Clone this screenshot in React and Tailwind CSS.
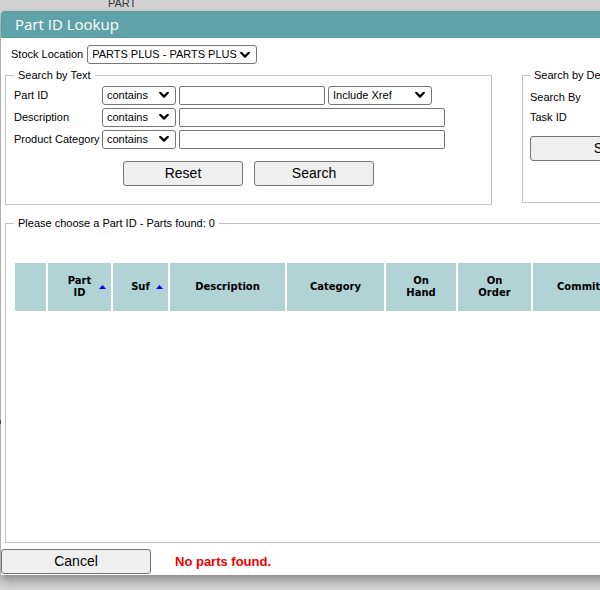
import React from "react";

const font = { fontFamily: '"Liberation Sans", Arial, sans-serif' };

function Chevron() {
  return (
    <svg width="10" height="7" viewBox="0 0 10 7" className="pointer-events-none absolute right-[6px] top-1/2 -translate-y-1/2">
      <path d="M1.2 1.3 L5 5.1 L8.8 1.3" fill="none" stroke="#000" strokeWidth="2.2" strokeLinecap="round" strokeLinejoin="round" />
    </svg>
  );
}

function Select({ className, text }) {
  return (
    <div className={"relative flex items-center border border-[#767676] rounded-[3px] bg-white text-[11px] text-black pl-[4px] " + className}>
      <span className="whitespace-nowrap">{text}</span>
      <Chevron />
    </div>
  );
}

function Input({ className }) {
  return <div className={"border border-[#767676] rounded-[2px] bg-white " + className} />;
}

function Btn({ className, children }) {
  return (
    <div className={"flex items-center justify-center border border-[#767676] rounded-[3px] bg-[#efefef] text-[14px] text-black " + className}>
      {children}
    </div>
  );
}

function Arrow() {
  return (
    <svg width="7" height="5" viewBox="0 0 7 5" className="absolute right-[5px] top-1/2 -translate-y-1/2">
      <path d="M0 4.5 L3.5 0.5 L7 4.5 Z" fill="#0000ee" />
    </svg>
  );
}

function Th({ className, children, arrow }) {
  return (
    <div className={"relative flex items-center justify-center bg-[#b1d3d6] text-center leading-[12px] " + className}>
      <span>{children}</span>
      {arrow && <Arrow />}
    </div>
  );
}

export default function App() {
  return (
    <div className="relative w-[600px] h-[590px] overflow-hidden bg-[#d2d2d2]" style={font}>
      <div className="absolute left-[108px] top-[-5px] text-[11px] text-[#333]">PART</div>
      <div className="absolute left-[0px] top-[420px] w-[2px] h-[4px] bg-[#555]" />
      <div className="absolute left-[1px] top-[11px] w-[800px] h-[564px] bg-white rounded-t-[3px] shadow-[0_5px_10px_rgba(0,0,0,0.35)] flex flex-col">
        <div className="h-[27px] bg-[#5fa3a8] rounded-t-[3px] flex items-center pl-[13px] text-white text-[15px] border border-[#5a9aa0]" style={{ fontFamily: '"Open Sans", "Liberation Sans", sans-serif' }}>
          Part ID Lookup
        </div>
        <div className="flex flex-col px-[4px]">
          <div className="flex items-center gap-[4px] pl-[6px] mt-[7px] text-[11px] text-black">
            <span>Stock Location</span>
            <Select className="w-[170px] h-[19px]" text="PARTS PLUS - PARTS PLUS" />
          </div>
          <div className="flex gap-[30px] mt-[3px]">
            <fieldset className="w-[487px] h-[138px] border border-[#c0c0c0] px-[8px] pt-[2px] shrink-0">
              <legend className="px-[4px] text-[11px] text-black">Search by Text</legend>
              <div className="flex flex-col gap-[3px] text-[11px] text-black">
                <div className="flex items-center h-[19px]">
                  <span className="w-[88px]">Part ID</span>
                  <Select className="w-[74px] h-[19px]" text="contains" />
                  <Input className="w-[146px] h-[19px] ml-[3px]" />
                  <Select className="w-[104px] h-[19px] ml-[3px]" text="Include Xref" />
                </div>
                <div className="flex items-center h-[19px]">
                  <span className="w-[88px]">Description</span>
                  <Select className="w-[74px] h-[19px]" text="contains" />
                  <Input className="w-[266px] h-[19px] ml-[3px]" />
                </div>
                <div className="flex items-center h-[19px]">
                  <span className="w-[88px] whitespace-nowrap">Product Category</span>
                  <Select className="w-[74px] h-[19px]" text="contains" />
                  <Input className="w-[266px] h-[19px] ml-[3px]" />
                </div>
                <div className="flex gap-[11px] mt-[9px] pl-[109px]">
                  <Btn className="w-[120px] h-[25px]">Reset</Btn>
                  <Btn className="w-[120px] h-[25px]">Search</Btn>
                </div>
              </div>
            </fieldset>
            <fieldset className="w-[240px] h-[136px] border border-[#c0c0c0] px-[7px] pt-[4px] shrink-0">
              <legend className="px-[4px] text-[11px] text-black">Search by Details</legend>
              <div className="flex flex-col text-[11px] text-black">
                <div className="h-[19px] flex items-center">Search By</div>
                <div className="h-[19px] flex items-center mt-[1px]">Task ID</div>
                <Btn className="w-[172px] h-[25px] mt-[9px]">Search</Btn>
              </div>
            </fieldset>
          </div>
          <fieldset className="mt-[10px] w-[780px] h-[328px] border border-[#c0c0c0] px-[9px]">
            <legend className="px-[4px] ml-[-1px] text-[11px] text-black">Please choose a Part ID - Parts found: 0</legend>
            <div className="flex gap-[2px] mt-[31px] h-[48px] text-[10px] font-bold text-black" style={{ fontFamily: '"DejaVu Sans", Verdana, sans-serif' }}>
              <Th className="w-[31px]"></Th>
              <Th className="w-[63px]" arrow>Part<br />ID</Th>
              <Th className="w-[55px]" arrow>Suf</Th>
              <Th className="w-[115px]">Description</Th>
              <Th className="w-[97px]">Category</Th>
              <Th className="w-[70px]">On<br />Hand</Th>
              <Th className="w-[73px]">On<br />Order</Th>
              <Th className="w-[110px]">Committed</Th>
              <Th className="w-[90px]">Avail</Th>
            </div>
          </fieldset>
          <div className="flex items-center mt-[6px] ml-[-4px]">
            <Btn className="w-[150px] h-[25px]">Cancel</Btn>
            <span className="ml-[24px] text-[13px] font-bold text-[#ee0000]">No parts found.</span>
          </div>
        </div>
      </div>
    </div>
  );
}
